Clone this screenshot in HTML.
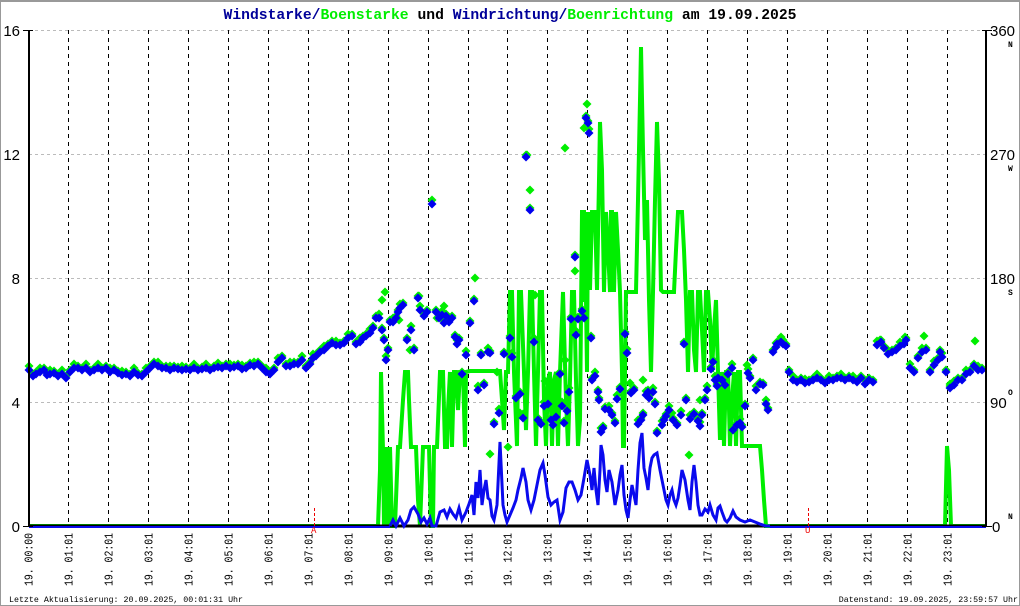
<!DOCTYPE html>
<html><head><meta charset="utf-8"><style>
html,body{margin:0;padding:0;background:#fff;}
svg{display:block;}
.m{font-family:"Liberation Mono",monospace;}
.s{font-family:"Liberation Sans",sans-serif;}
</style></head><body>
<svg id="c" width="1020" height="606" viewBox="0 0 1020 606" xmlns="http://www.w3.org/2000/svg">
<rect x="0.5" y="0.5" width="1019" height="605" fill="#fff" stroke="#999" stroke-width="1"/>
<line x1="0" y1="1" x2="1020" y2="1" stroke="#999" stroke-width="2"/>
<text x="510" y="19" text-anchor="middle" class="m" font-size="14.7" font-weight="bold"><tspan fill="#000099">Windstarke/</tspan><tspan fill="#00ee00">Boenstarke</tspan><tspan fill="#000"> und </tspan><tspan fill="#000099">Windrichtung/</tspan><tspan fill="#00ee00">Boenrichtung</tspan><tspan fill="#000"> am 19.09.2025</tspan></text>
<g stroke="#bbb" stroke-width="1" stroke-dasharray="3,3">
<line x1="29" y1="30.5" x2="986" y2="30.5"/><line x1="29" y1="154.5" x2="986" y2="154.5"/><line x1="29" y1="278.5" x2="986" y2="278.5"/><line x1="29" y1="402.5" x2="986" y2="402.5"/>
</g>
<g id="vl" stroke="#000" stroke-width="1" stroke-dasharray="4,4"></g>
<g id="green" fill="#00ee00"></g>
<polyline id="gl" fill="none" stroke="#00ee00" stroke-width="4" stroke-linejoin="miter"/>
<g id="blue" fill="#0000ee"></g>
<line x1="29" y1="526" x2="986" y2="526" stroke="#000" stroke-width="3"/>
<polyline id="bl" fill="none" stroke="#0a0aee" stroke-width="3"/>
<line x1="29" y1="527" x2="390" y2="527" stroke="#0a0aee" stroke-width="2"/>
<line x1="770" y1="527" x2="986" y2="527" stroke="#0a0aee" stroke-width="2"/>
<g stroke="#000" stroke-width="2"><line x1="29" y1="30" x2="29" y2="527"/><line x1="986" y1="30" x2="986" y2="527"/></g>
<g stroke="#000" stroke-width="1"><line x1="23" y1="30.5" x2="33" y2="30.5"/><line x1="23" y1="526.5" x2="33" y2="526.5"/><line x1="982" y1="30.5" x2="992" y2="30.5"/><line x1="982" y1="526.5" x2="992" y2="526.5"/></g>
<g class="s" font-size="15" fill="#000" text-anchor="end">
<text x="20" y="36">16</text><text x="20" y="160">12</text><text x="20" y="284">8</text><text x="20" y="408">4</text><text x="20" y="532">0</text>
</g>
<g class="s" font-size="15" fill="#000">
<text x="990" y="36">360</text><text x="990" y="160">270</text><text x="990" y="284">180</text><text x="990" y="408">90</text><text x="992" y="532">0</text>
</g>
<g class="m" font-size="8" font-weight="bold" fill="#000">
<text x="1008" y="47">N</text><text x="1008" y="171">W</text><text x="1008" y="295">S</text><text x="1008" y="395">O</text><text x="1008" y="519">N</text>
</g>
<g stroke="#e00" stroke-width="1" stroke-dasharray="3,2"><line x1="314.5" y1="508" x2="314.5" y2="528"/><line x1="808.5" y1="508" x2="808.5" y2="528"/></g>
<g class="m" font-size="9" fill="#e00"><text x="311" y="533">A</text><text x="805" y="533">U</text></g>
<g id="xl" class="m" font-size="12" fill="#000"></g>
<text x="9" y="602" class="m" font-size="8.3" fill="#000">Letzte Aktualisierung: 20.09.2025, 00:01:31 Uhr</text>
<text x="1018" y="602" text-anchor="end" class="m" font-size="8.3" fill="#000">Datenstand: 19.09.2025, 23:59:57 Uhr</text>
</svg>
<script>
var NS="http://www.w3.org/2000/svg";
function el(t,a,p){var e=document.createElementNS(NS,t);for(var k in a)e.setAttribute(k,a[k]);document.getElementById(p).appendChild(e);return e;}
var hx=[];for(var h=0;h<24;h++){hx.push(Math.round(28.05+39.95*h)+0.5);}
for(var h=1;h<24;h++)el("line",{x1:hx[h],y1:30,x2:hx[h],y2:526},"vl");
for(var h=0;h<24;h++){var t=el("text",{transform:"translate("+(hx[h]+4)+",586) rotate(-90)",textLength:"53",lengthAdjust:"spacingAndGlyphs"},"xl");t.textContent="19. "+(h<10?"0":"")+h+(h==0?":00":":01");}
var bl="390,526 393,520 396,526 400,518 404,526 408,520 411,510 414,507 418,514 421,522 424,518 427,524 430,518 432,526 436,526 440,512 444,510 447,517 450,509 453,514 456,518 459,508 462,520 466,512 469,504 472,495 474,515 476,482 478,498 480,470 482,505 484,490 486,480 488,498 490,500 492,516 494,520 497,505 500,442 503,505 505,515 507,522 510,515 513,508 516,500 518,490 521,478 523,468 526,482 528,500 531,510 534,500 537,485 540,470 543,463 545,475 548,497 551,505 554,502 557,500 560,520 563,512 566,488 569,482 572,482 575,490 578,500 581,495 584,478 587,460 590,475 592,490 594,468 596,490 598,505 600,470 601,445 603,455 605,480 607,492 609,470 612,482 615,505 618,490 620,475 622,465 624,495 626,510 628,518 630,500 632,485 634,495 636,505 638,470 640,443 642,433 644,468 646,478 648,490 650,468 652,458 654,455 657,453 660,470 662,480 664,490 666,500 668,505 670,495 672,490 674,500 676,505 678,498 680,485 682,470 685,480 688,500 690,510 692,482 694,465 696,482 698,505 700,515 702,515 705,509 708,512 710,505 713,515 716,520 718,508 720,506 722,512 725,520 727,522 730,518 733,511 736,517 740,520 745,522 750,520 755,522 760,524 766,526 770,526";
document.getElementById("bl").setAttribute("points",bl);
var gl="29,526 378,526 380,470 381,372 383,450 384,526 386,447 388,526 390,447 392,526 395,526 398,447 400,447 403,400 405,372 408,372 409,400 411,447 416,447 418,500 420,526 423,447 429,447 431,526 433,526 434,447 437,447 440,372 443,372 445,447 447,447 448,410 450,372 452,447 454,372 456,372 458,410 460,372 463,372 465,447 466,372 470,371 500,371 502,400 504,430 506,372 508,372 510,292 512,292 514,372 517,446 519,292 521,292 524,372 526,430 528,372 530,292 532,292 534,372 536,446 538,372 540,292 542,292 544,400 546,446 548,380 550,372 552,446 554,380 556,372 558,446 560,372 563,292 566,400 568,446 570,380 572,292 574,292 576,380 578,446 580,420 582,212 584,212 585,300 586,300 587,372 588,212 590,290 592,212 595,212 597,290 599,180 600,122 602,170 604,292 606,212 608,250 610,292 611,212 612,212 614,292 616,212 618,250 620,292 622,372 623,446 624,446 625,372 626,292 636,292 638,200 640,100 641,47 643,150 645,240 647,200 649,300 651,372 653,292 655,200 657,122 659,180 661,290 663,292 674,292 676,250 678,212 682,212 684,250 686,300 688,372 690,292 692,292 694,350 696,372 698,292 700,292 702,330 704,372 706,292 708,292 710,320 712,372 714,330 716,300 718,372 720,440 722,372 724,446 726,372 728,372 730,446 732,400 734,372 736,446 738,372 740,372 742,446 760,446 762,470 764,500 766,526 945,526 947,446 949,470 951,526 986,526";
document.getElementById("gl").setAttribute("points",gl);
var bd=[29,370,33,376,36,374,40,372,44,370,47,375,50,374,54,373,58,376,62,374,66,378,70,372,74,368,78,368,82,370,86,368,90,372,94,370,98,368,102,370,106,368,110,372,114,370,118,373,122,375,126,374,130,376,134,372,138,375,142,376,146,372,150,368,154,364,158,366,162,368,166,368,170,370,174,368,178,369,182,370,186,369,190,370,194,368,198,370,202,369,206,368,210,370,214,368,218,367,222,368,226,366,230,368,234,367,238,366,242,369,246,368,250,365,254,366,258,364,262,368,266,372,270,374,274,370,278,362,282,358,286,366,290,366,294,364,298,364,302,360,306,368,310,364,313,358,316,356,320,352,324,350,328,346,332,343,336,345,340,345,344,343,348,338,352,336,356,344,360,342,363,338,366,336,370,333,373,328,376,318,379,318,382,330,384,340,386,360,388,350,390,322,393,322,396,318,398,312,400,308,403,305,407,340,411,330,414,350,418,298,420,310,424,316,427,312,432,204,436,312,439,318,442,315,444,323,446,316,449,322,452,318,455,337,457,344,459,340,462,374,466,355,470,323,474,301,478,390,481,355,484,385,488,352,490,353,494,424,499,413,504,354,510,338,512,357,516,398,520,394,523,418,526,157,530,210,534,342,538,420,541,424,544,406,548,404,551,420,553,425,556,417,560,374,562,406,564,423,567,411,569,392,571,319,575,257,576,335,578,319,582,311,584,318,586,118,588,123,589,133,591,338,592,380,595,376,598,392,599,400,601,432,603,428,605,409,609,410,612,415,615,423,617,399,620,389,625,334,627,353,631,393,634,390,638,424,641,420,643,415,646,395,648,392,649,398,653,392,655,404,657,433,662,425,664,420,666,416,669,410,673,420,677,425,681,415,684,344,686,400,690,419,694,414,698,421,700,426,702,415,705,400,707,390,711,369,713,362,715,380,717,386,718,378,722,380,725,385,728,374,732,368,733,430,737,425,740,423,742,427,745,406,748,373,750,378,753,360,756,390,760,384,763,385,766,404,768,410,773,352,776,347,777,344,781,342,783,344,786,346,789,372,793,380,797,382,801,380,805,383,809,382,813,380,817,378,821,380,825,383,829,380,833,380,837,378,841,378,845,380,849,378,853,380,857,382,861,378,865,384,869,380,873,382,877,345,881,342,884,348,888,354,892,352,896,350,900,346,904,344,906,340,910,368,914,372,918,358,922,352,926,350,930,372,934,365,938,360,940,352,942,357,946,372,950,388,954,385,958,380,962,380,966,374,970,372,974,366,978,370,982,370];
var gx=[385,292,382,300,399,320,419,296,437,318,475,278,527,155,530,190,565,148,587,104,584,128,565,360,520,413,508,447,490,454,535,295,575,271,410,350,444,306,497,372,545,381,630,383,643,380,672,413,689,455,700,400,725,378,747,365,781,337,880,340,905,337,924,336,975,341,950,384];
function dia(x,y,p){el("polygon",{points:(x)+","+(y-4.5)+" "+(x+4.5)+","+y+" "+x+","+(y+4.5)+" "+(x-4.5)+","+y},p);}
for(var i=0;i<bd.length;i+=2){var d=(i/2)%3==0?-4:-2;dia(bd[i],bd[i+1]+d,"green");}
for(var i=0;i<gx.length;i+=2)dia(gx[i],gx[i+1],"green");
for(var i=0;i<bd.length;i+=2)dia(bd[i],bd[i+1],"blue");
</script>
</body></html>
